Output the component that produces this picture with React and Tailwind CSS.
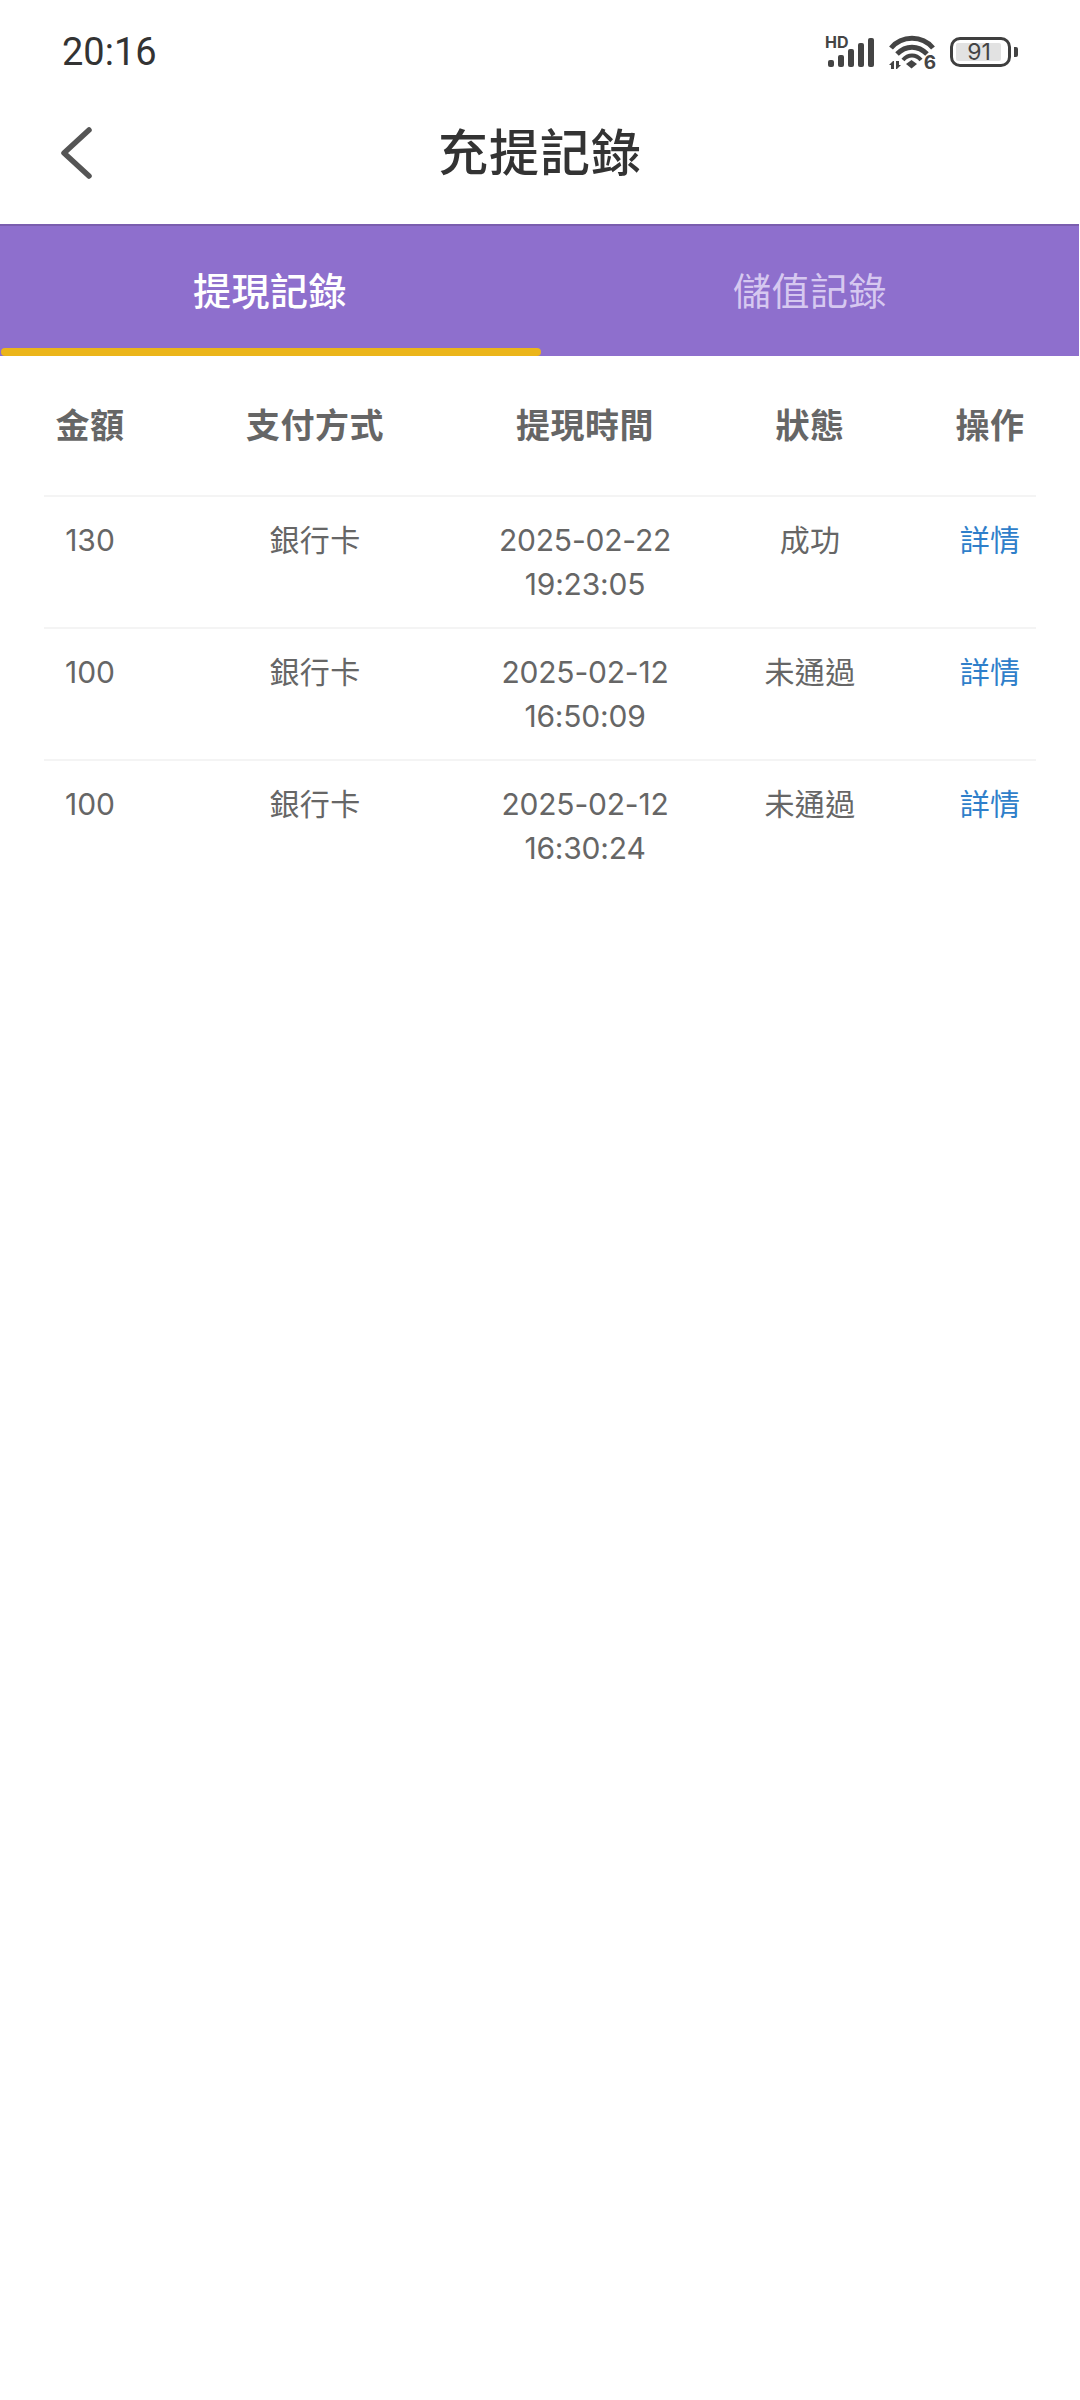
import React from "react";

const cjk = "font-['Inter','Noto_Sans_CJK_TC',sans-serif]";
const columns = "grid grid-cols-[92px_358px_182px_268px_92px] text-center";

const records = [
    { amount: "130", method: "銀行卡", date: "2025-02-22", time: "19:23:05", status: "成功" },
    { amount: "100", method: "銀行卡", date: "2025-02-12", time: "16:50:09", status: "未通過" },
    { amount: "100", method: "銀行卡", date: "2025-02-12", time: "16:30:24", status: "未通過" },
];

const StatusIcons = () => (
    <div className="flex items-center">
        {/* Signal */}
        <div className="relative w-[54px] h-[34px]">
            <span className="absolute left-0 top-[-1px] text-[16px] leading-[16px] font-bold text-[#444] font-['Inter',sans-serif]">HD</span>
            <svg width="54" height="34" viewBox="0 0 54 34" fill="#444">
                <rect x="3" y="25" width="6" height="7" rx="2" />
                <rect x="13" y="20" width="6" height="12" rx="2" />
                <rect x="23" y="14" width="6" height="18" rx="2" />
                <rect x="33" y="8" width="6" height="24" rx="2" />
                <rect x="43" y="3" width="6" height="29" rx="2" />
            </svg>
        </div>
        {/* Wifi */}
        <div className="relative w-[50px] h-[36px] ml-[9px]">
            <svg width="50" height="36" viewBox="0 0 50 36" fill="none" stroke="#444" strokeWidth="5">
                <path d="M3 14 C14 1 34 1 45 14" />
                <path d="M9 20 C18 11 30 11 39 20" />
                <path d="M15 26 C20 20 28 20 33 26" strokeWidth="4" />
                <path d="M18 30 L23.5 26 L29 30 L23.5 34.5 Z" fill="#444" stroke="none" />
                <path d="M5 27 L1 31 H3 V35 H6 V27 Z M9 35 L13 31 H11 V27 H8 V35 Z" fill="#444" stroke="none" />
            </svg>
            <span className="absolute right-[2px] bottom-[-2px] text-[19px] leading-[18px] font-bold text-[#444] font-['Inter',sans-serif]">6</span>
        </div>
        {/* Battery */}
        <div className="relative w-[61px] h-[30px] ml-[12px] rounded-[10px] border-[3px] border-[#3f3f3f] p-[3px]">
            <div className="w-[45px] h-full bg-[#e2e2e2] rounded-[2px]" />
            <span className="absolute inset-0 pr-[3px] flex items-center justify-center text-[23px] leading-none text-[#444] font-['Inter',sans-serif]">91</span>
        </div>
        <div className="w-[4px] h-[10px] ml-[3px] bg-[#444] rounded-r-[2px]" />
    </div>
);

export default function App() {
    return (
        <div className={`min-h-[2400px] bg-white ${cjk}`}>
            {/* Status bar */}
            <div className="h-[104px] pl-[62px] pr-[62px] flex items-center justify-between">
                <span className="text-[38px] leading-none text-[#333] font-['Roboto',sans-serif]">20:16</span>
                <StatusIcons />
            </div>

            {/* Title */}
            <div className="h-[120px] pb-[22px] relative flex items-center justify-center">
                <svg className="absolute left-[58px] top-[21px]" width="36" height="56" viewBox="0 0 36 56" fill="none" stroke="#555" strokeWidth="5.5" strokeLinecap="round" strokeLinejoin="round">
                    <path d="M31 5 L6 28 L31 51" />
                </svg>
                <h1 className="text-[50px] leading-none font-medium text-[#333] tracking-[1px]">充提記錄</h1>
            </div>

            {/* Tabs */}
            <div className="h-[132px] mr-px bg-[#8e6fcd] border-t-2 border-[#7a5eae] grid grid-cols-[540px_1fr]">
                <div className="relative flex items-center justify-center text-[38px] font-medium text-white tracking-[0.5px]">
                    提現記錄
                    <div className="absolute left-[1px] right-[-1px] bottom-0 h-[8px] bg-[#ebb51a] rounded-[4px]" />
                </div>
                <div className="flex items-center justify-center pl-px text-[38px] text-[#d6c8f0] tracking-[0.5px]">儲值記錄</div>
            </div>

            {/* Table */}
            <div className="mx-[44px] w-[992px]">
                <div className={`${columns} h-[139px] items-center text-[34px] font-bold text-[#666] tracking-[0.5px]`}>
                    <div>金額</div>
                    <div>支付方式</div>
                    <div>提現時間</div>
                    <div>狀態</div>
                    <div>操作</div>
                </div>
                {records.map((r, i) => (
                    <div key={i} className={`${columns} h-[132px] pt-[21px] border-t-2 border-[#f4f4f4] text-[30px] leading-[44px] text-[#666]`}>
                        <div>{r.amount}</div>
                        <div className="tracking-[0.3px]">{r.method}</div>
                        <div className="tracking-[-0.2px]">
                            {r.date}
                            <br />
                            {r.time}
                        </div>
                        <div className="tracking-[0.3px]">{r.status}</div>
                        <div className="text-[#2f7fca] tracking-[0.3px]">詳情</div>
                    </div>
                ))}
            </div>
        </div>
    );
}
